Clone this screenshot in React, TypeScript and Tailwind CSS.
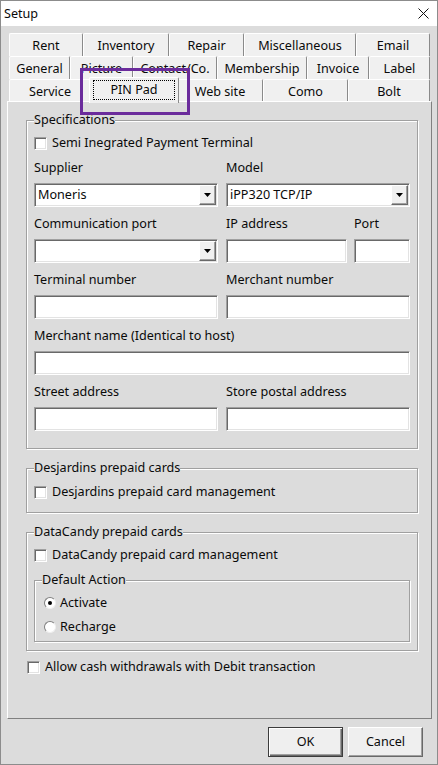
import React from "react";

const sunken =
  "bg-white border border-t-[#a0a0a0] border-l-[#a0a0a0] border-b-white border-r-white shadow-[inset_1px_1px_0_#696969,inset_-1px_-1px_0_#e3e3e3]";

const row1 = [
  ["Rent", "w-[74px]"],
  ["Inventory", "w-[86px]"],
  ["Repair", "w-[75px]"],
  ["Miscellaneous", "w-[112px]"],
  ["Email", "w-[74px]"],
];
const row2 = [
  ["General", "w-[61px]"],
  ["Picture", "w-[63px]"],
  ["Contact/Co.", "w-[84px]"],
  ["Membership", "w-[90px]"],
  ["Invoice", "w-[62px]"],
  ["Label", "w-[61px]"],
];
const row3 = [
  ["Service", "w-[82px]"],
  ["PIN Pad", "w-[86px]"],
  ["Web site", "w-[86px]"],
  ["Como", "w-[85px]"],
  ["Bolt", "w-[82px]"],
];

function Tab({ label, width }: { label: string; width: string }) {
  return (
    <div
      className={`${width} h-[23px] shrink-0 flex items-center justify-center bg-[#f0f0f0] border-l border-t border-r border-l-white border-t-white border-r-[#8a8a8a] rounded-t-[2px]`}
    >
      <span className="mt-[1px]">{label}</span>
    </div>
  );
}

function SelectedTab({ label }: { label: string }) {
  return (
    <div className="relative z-10 w-[90px] -mx-[2px] -mt-[2px] h-[26px] shrink-0 flex items-center justify-center bg-[#f0f0f0] border-l border-t border-r border-l-white border-t-white border-r-[#8a8a8a] rounded-t-[2px]">
      <div className="absolute left-[3px] right-[3px] top-[2px] bottom-[3px] border border-dotted border-black" />
      <span className="-mt-[1px]">{label}</span>
    </div>
  );
}

function Checkbox({ label, className = "" }: { label: string; className?: string }) {
  return (
    <div className={`flex items-center h-[16px] gap-[5px] ${className}`}>
      <div className={`w-[13px] h-[13px] shrink-0 ${sunken}`} />
      <span>{label}</span>
    </div>
  );
}

function Radio({ label, checked, className = "" }: { label: string; checked?: boolean; className?: string }) {
  return (
    <div className={`flex items-center h-[16px] gap-[4px] ml-[2px] ${className}`}>
      <div className="w-[12px] h-[12px] shrink-0 rounded-full bg-white border border-t-[#808080] border-l-[#808080] border-b-[#f0f0f0] border-r-[#f0f0f0] flex items-center justify-center">
        {checked && <div className="w-[4px] h-[4px] rounded-full bg-black" />}
      </div>
      <span>{label}</span>
    </div>
  );
}

function Field({ width, value = "" }: { width: string; value?: string }) {
  return <div className={`${width} h-[24px] ${sunken} flex items-center px-[3px]`}>{value}</div>;
}

function Select({ width, value = "" }: { width: string; value?: string }) {
  return (
    <div className={`${width} h-[24px] ${sunken} flex items-center pl-[3px]`}>
      <span className="flex-1">{value}</span>
      <div className="w-[17px] h-[20px] mr-[1px] flex items-center justify-center bg-[#f0f0f0] border border-t-white border-l-white border-r-[#696969] border-b-[#696969] shadow-[inset_-1px_-1px_0_#a0a0a0]">
        <svg width="7" height="4" viewBox="0 0 7 4">
          <path d="M0 0H7L3.5 4Z" fill="#000" />
        </svg>
      </div>
    </div>
  );
}

function Label({ children, className = "" }: { children: React.ReactNode; className?: string }) {
  return <div className={`h-[16px] whitespace-nowrap ${className}`}>{children}</div>;
}

const groupCls =
  "border border-[#a0a0a0] shadow-[inset_1px_1px_0_#ffffff,1px_1px_0_#ffffff] px-[7px] min-w-0";

export default function App() {
  return (
    <div className="relative w-[438px] h-[765px] bg-[#dcdcdc] border border-[#8c8c8c] flex flex-col font-['Noto_Sans',sans-serif] text-[12.6px] leading-[16px] text-[#0a0a0a]">
      {/* title bar */}
      <div className="h-[25px] bg-white flex items-center justify-between pl-[3px] pr-[8px] shrink-0">
        <span>Setup</span>
        <svg width="11" height="11" viewBox="0 0 11 11">
          <path d="M0.5 0.5L10.5 10.5M10.5 0.5L0.5 10.5" stroke="#111" strokeWidth="1" />
        </svg>
      </div>

      {/* tabs */}
      <div className="ml-[8px] mt-[7px] w-[421px] flex flex-col">
        <div className="flex">
          {row1.map(([l, w]) => (
            <Tab key={l} label={l} width={w} />
          ))}
        </div>
        <div className="flex">
          {row2.map(([l, w]) => (
            <Tab key={l} label={l} width={w} />
          ))}
        </div>
        <div className="flex h-[23px] items-start">
          {row3.map(([l, w]) =>
            l === "PIN Pad" ? <SelectedTab key={l} label={l} /> : <Tab key={l} label={l} width={w} />
          )}
        </div>
      </div>

      {/* page */}
      <div className="ml-[6px] w-[425px] h-[618px] shrink-0 -mt-[1px] border border-t-white border-l-white border-r-[#808080] border-b-[#808080] pl-[18px] pt-[10px]">
        <fieldset className={`w-[392px] pb-[17px] ${groupCls}`}>
          <legend className="bg-[#dcdcdc]">Specifications</legend>
          <Checkbox label="Semi Inegrated Payment Terminal" className="mt-[7px]" />

          <div className="flex gap-[8px] mt-[9px]">
            <Label className="w-[184px]">Supplier</Label>
            <Label>Model</Label>
          </div>
          <div className="flex gap-[8px] mt-[7px]">
            <Select width="w-[184px]" value="Moneris" />
            <Select width="w-[184px]" value="iPP320 TCP/IP" />
          </div>

          <div className="flex gap-[8px] mt-[9px]">
            <Label className="w-[184px]">Communication port</Label>
            <Label className="w-[121px]">IP address</Label>
            <Label className="ml-[-1px]">Port</Label>
          </div>
          <div className="flex gap-[8px] mt-[7px]">
            <Select width="w-[184px]" />
            <Field width="w-[121px]" />
            <Field width="w-[56px] ml-[-1px]" />
          </div>

          <div className="flex gap-[8px] mt-[9px]">
            <Label className="w-[184px]">Terminal number</Label>
            <Label>Merchant number</Label>
          </div>
          <div className="flex gap-[8px] mt-[7px]">
            <Field width="w-[184px]" />
            <Field width="w-[184px]" />
          </div>

          <Label className="mt-[9px]">Merchant name (Identical to host)</Label>
          <div className="mt-[7px]">
            <Field width="w-[376px]" />
          </div>

          <div className="flex gap-[8px] mt-[9px]">
            <Label className="w-[184px]">Street address</Label>
            <Label>Store postal address</Label>
          </div>
          <div className="flex gap-[8px] mt-[7px]">
            <Field width="w-[184px]" />
            <Field width="w-[184px]" />
          </div>
        </fieldset>

        <fieldset className={`w-[392px] mt-[11px] pb-[12px] ${groupCls}`}>
          <legend className="bg-[#dcdcdc]">Desjardins prepaid cards</legend>
          <Checkbox label="Desjardins prepaid card management" className="mt-[8px]" />
        </fieldset>

        <fieldset className={`w-[392px] mt-[11px] pb-[8px] ${groupCls}`}>
          <legend className="bg-[#dcdcdc]">DataCandy prepaid cards</legend>
          <Checkbox label="DataCandy prepaid card management" className="mt-[7px]" />
          <fieldset className={`w-[376px] mt-[9px] pb-[6px] ${groupCls}`}>
            <legend className="bg-[#dcdcdc]">Default Action</legend>
            <Radio label="Activate" checked className="mt-[7px]" />
            <Radio label="Recharge" className="mt-[8px]" />
          </fieldset>
        </fieldset>

        <Checkbox label="Allow cash withdrawals with Debit transaction" className="mt-[8px] ml-[1px]" />
      </div>

      {/* buttons */}
      <div className="flex justify-end gap-[5px] pr-[14px] mt-[8px]">
        <button className="w-[75px] h-[30px] bg-[#efefef] border border-[#3c3c3c] shadow-[inset_1px_1px_0_#ffffff,inset_-1px_-1px_0_#696969,inset_-2px_-2px_0_#a0a0a0]">
          OK
        </button>
        <button className="w-[75px] h-[30px] bg-[#efefef] border border-t-white border-l-white border-r-[#696969] border-b-[#696969] shadow-[inset_-1px_-1px_0_#a0a0a0]">
          Cancel
        </button>
      </div>

      {/* highlight */}
      <div className="absolute left-[79px] top-[67px] w-[110px] h-[47px] border-[3px] border-[#6b2c9c] pointer-events-none z-20" />
    </div>
  );
}
